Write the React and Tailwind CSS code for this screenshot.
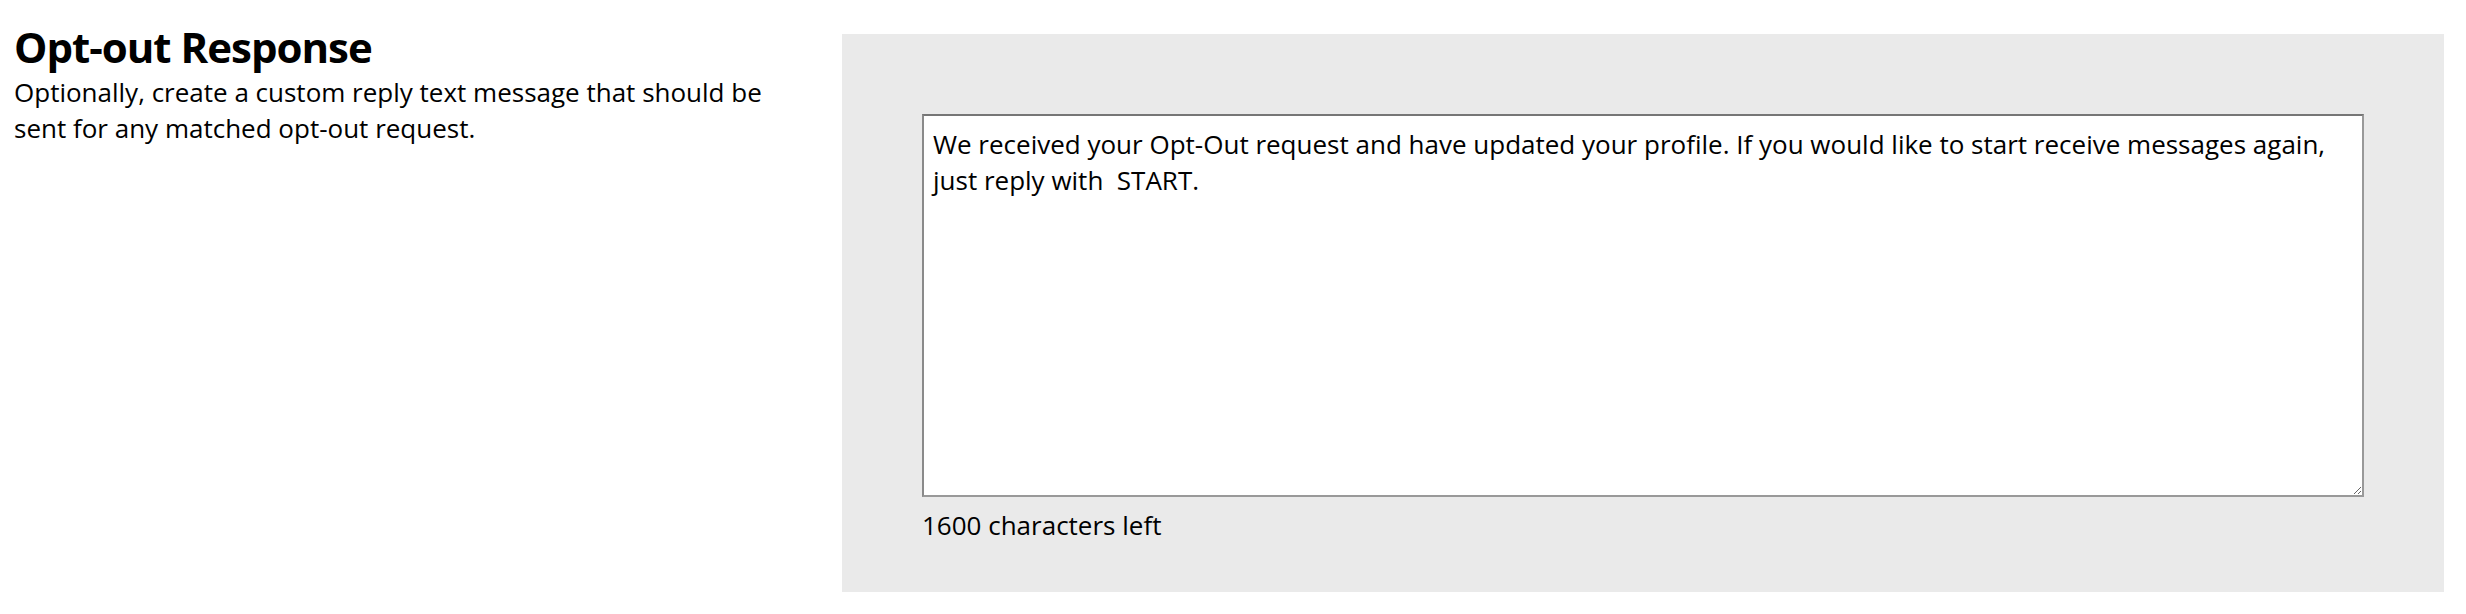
export default function App() {
  return (
    <div
      className="flex w-[2466px] h-[614px] bg-white text-black"
      style={{ fontFamily: '"Open Sans", "Noto Sans", sans-serif' }}
    >
      {/* Description column */}
      <div className="w-[842px] shrink-0 pl-[14px] pr-[40px] pt-[22px]">
        <h2 className="text-[42px] leading-[50px] font-bold tracking-[-1px]">Opt-out Response</h2>
        <p className="mt-[2px] text-[26px] leading-[36px]">
          Optionally, create a custom reply text message that should be sent for any matched opt-out request.
        </p>
      </div>

      {/* Form panel */}
      <div className="mt-[34px] mr-[22px] h-[558px] flex-1 bg-[#eaeaea] px-[80px] pt-[80px]">
        <textarea
          className="block w-full h-[383px] border-2 border-[#999999] border-t-[#767676] border-l-[#8a8a8a] bg-white px-[9px] pt-[10px] pb-[9px] text-[26px] leading-[36px] text-black outline-none"
          defaultValue="We received your Opt-Out request and have updated your profile. If you would like to start receive messages again, just reply with  START."
        />
        <p className="mt-[10px] text-[26px] leading-[36px]">1600 characters left</p>
      </div>
    </div>
  );
}
